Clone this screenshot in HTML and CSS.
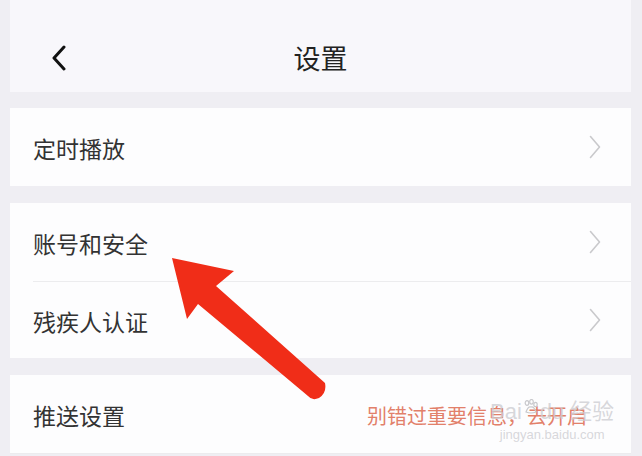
FILE: index.html
```html
<!DOCTYPE html>
<html lang="zh-CN">

<head>
    <meta charset="UTF-8">
    <meta name="viewport" content="width=device-width, initial-scale=1.0">
    <title>设置</title>
    <link rel="stylesheet" href="styles.css">
</head>

<body>

    <div class="panel">
        <div class="header">
            <svg class="back" width="18" height="26" viewBox="0 0 18 26">
                <path d="M14 2 L4 13 L14 24" fill="none" stroke="#111" stroke-width="3" stroke-linecap="round" stroke-linejoin="round"/>
            </svg>
            <h1 class="title">设置</h1>
        </div>

        <div class="group">
            <div class="row">
                <span class="label">定时播放</span>
                <svg class="arrow-right" width="12" height="24" viewBox="0 0 12 24">
                    <path d="M1.5 1.5 L10.5 12 L1.5 22.5" fill="none" stroke="#c9c9cc" stroke-width="1.6" stroke-linecap="round" stroke-linejoin="round"/>
                </svg>
            </div>
        </div>

        <div class="group">
            <div class="row">
                <span class="label">账号和安全</span>
                <svg class="arrow-right" width="12" height="24" viewBox="0 0 12 24">
                    <path d="M1.5 1.5 L10.5 12 L1.5 22.5" fill="none" stroke="#c9c9cc" stroke-width="1.6" stroke-linecap="round" stroke-linejoin="round"/>
                </svg>
            </div>
            <div class="row line-top">
                <span class="label">残疾人认证</span>
                <svg class="arrow-right" width="12" height="24" viewBox="0 0 12 24">
                    <path d="M1.5 1.5 L10.5 12 L1.5 22.5" fill="none" stroke="#c9c9cc" stroke-width="1.6" stroke-linecap="round" stroke-linejoin="round"/>
                </svg>
            </div>
        </div>

        <div class="group">
            <div class="row line-bottom">
                <span class="label">推送设置</span>
                <span class="hint">别错过重要信息，去开启</span>
            </div>
        </div>
    </div>

    <div class="watermark">
        <p class="wm-logo">Bai<svg class="paw" width="16" height="16" viewBox="0 0 16 16"><g fill="none" stroke="#c8c8cc" stroke-width="1.2"><ellipse cx="4" cy="4" rx="1.8" ry="2.3"/><ellipse cx="8.5" cy="2.8" rx="1.8" ry="2.3"/><ellipse cx="12.5" cy="5.5" rx="1.7" ry="2.1"/><path d="M3 13 Q5 7 8 8 Q11 7 13 13 Q8 15 3 13 Z"/></g></svg>du 经验</p>
        <p class="wm-site">jingyan.baidu.com</p>
    </div>

    <svg class="pointer" width="642" height="456" viewBox="0 0 642 456">
        <path d="M172 258 L234 271 L216 286 L325 383 Q327 393 319 398 Q312 401 308 396 L198 304 L187 319 Z" fill="#f02d18"/>
    </svg>

</body>

</html>
```

FILE: styles.css
```css
body {
    margin: 0;
    width: 642px;
    height: 456px;
    overflow: hidden;
    background-color: #efeef3;
    font-family: "Noto Sans CJK SC", "Noto Sans", sans-serif;
    color: #333;
    position: relative;
}

.panel {
    margin: 0 11px 0 10px;
}

.header {
    height: 92px;
    background-color: #f8f7fb;
    display: flex;
    align-items: center;
    justify-content: center;
    position: relative;
}

.back {
    position: absolute;
    left: 40px;
    top: 45px;
}

.title {
    margin: 0;
    padding-top: 22px;
    font-size: 27px;
    font-weight: normal;
    color: #222;
}

.group {
    margin-top: 16px;
    background-color: #fdfdfe;
}

.group + .group {
    margin-top: 17px;
}

.row {
    height: 78px;
    display: flex;
    align-items: center;
    justify-content: space-between;
    padding: 0 30px 0 23px;
    box-sizing: border-box;
}

.line-top {
    border-top: 1px solid #ececee;
    margin-left: 23px;
    padding-left: 0;
    height: 77px;
}

.line-bottom {
    border-bottom: 1px solid #ececee;
    height: 79px;
}

.label {
    font-size: 23px;
    padding-top: 1px;
}

.hint {
    font-size: 20px;
    color: #e2806a;
    padding-top: 2px;
    margin-right: 14px;
}

.watermark {
    position: absolute;
    left: 490px;
    top: 397px;
    white-space: nowrap;
    color: rgba(205, 205, 210, 0.8);
    text-align: center;
    font-family: "Liberation Sans", Arial, sans-serif;
}

.watermark p {
    margin: 0;
}

.wm-logo {
    font-size: 22px;
    line-height: 30px;
}

.paw {
    vertical-align: top;
    margin: 2px 1px 0;
}

.wm-site {
    font-size: 13px;
    line-height: 16px;
}

.pointer {
    position: absolute;
    left: 0;
    top: 0;
}
```
